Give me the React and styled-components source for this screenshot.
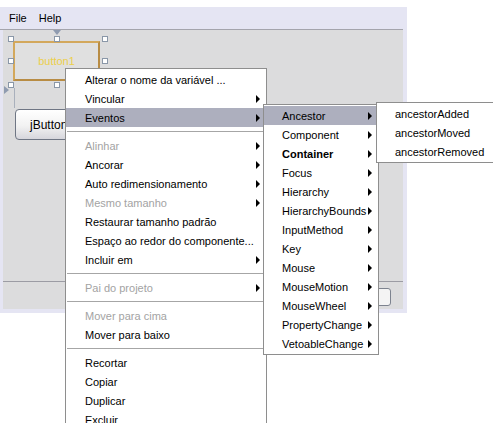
import React from 'react'
import styled, { createGlobalStyle } from 'styled-components'

const GlobalStyle = createGlobalStyle`
  html, body {
    margin: 0;
    padding: 0;
    background: #ffffff;
  }
  body {
    font-family: "Liberation Sans", Arial, sans-serif;
    font-size: 11px;
    color: #000;
  }
`

const Page = styled.div`
  position: relative;
  width: 493px;
  height: 423px;
  overflow: hidden;
  padding-top: 7px;
  box-sizing: border-box;
`

const Window = styled.div`
  width: 407px;
  height: 306px;
  display: flex;
  flex-direction: column;
  background: #e5e5f3;
`

const MenuBar = styled.div`
  height: 23px;
  display: flex;
  align-items: center;
  gap: 12px;
  padding-left: 9px;
  border-bottom: 1px solid #a4a4ac;
  width: 403px;
  box-sizing: border-box;
  font-size: 11px;
`

const PanelWrap = styled.div`
  flex: 1;
  display: flex;
  padding: 0 4px 4px 3px;
`

const Panel = styled.div`
  flex: 1;
  display: flex;
  flex-direction: column;
  background: #dcdcdd;
`

// free-form design surface: components sit where the user dropped them
const Canvas = styled.div`
  position: relative;
  height: 251px;
  border-bottom: 1px solid #9c9ca4;
`

const BottomStrip = styled.div`
  flex: 1;
  display: flex;
  justify-content: flex-end;
  align-items: flex-start;
  padding: 6px 12px 0 0;
`

const Field = styled.div`
  width: 50px;
  height: 16px;
  border: 1px solid #7d838f;
  border-radius: 3px;
  background: #f4f4f4;
`

const Selection = styled.div`
  position: absolute;
  left: 5px;
  top: 6px;
  width: 99px;
  height: 51px;
`

const SelectedButton = styled.div`
  position: absolute;
  left: 5px;
  top: 5px;
  width: 83px;
  height: 36px;
  border: 2px solid #d3a85c;
  border-right-color: #b88c44;
  border-bottom-color: #b88c44;
  background: #e0e0e0;
  display: flex;
  align-items: center;
  justify-content: center;
  color: #eccf4c;
  font-size: 11px;
`

const Handle = styled.div`
  position: absolute;
  width: 4px;
  height: 4px;
  border: 1px solid #8a97a8;
  background: #ffffff;
  left: ${p => p.$x}px;
  top: ${p => p.$y}px;
`

const AnchorLine = styled.div`
  position: absolute;
  left: 6px;
  top: 52px;
  width: 1px;
  height: 20px;
  background: #a9b0bc;
`

const Triangle = styled.div`
  position: absolute;
  width: 0;
  height: 0;
  border-style: solid;
  border-color: transparent;
  ${p => (p.$dir === 'down'
    ? 'left: 50px; top: 0; border-width: 5px 4px 0 4px; border-top-color: #8f9bb0;'
    : 'left: 1px; top: 56px; border-width: 4px 0 4px 5px; border-left-color: #8f9bb0;')}
`

const PlainButton = styled.div`
  position: absolute;
  left: 12px;
  top: 79px;
  width: 90px;
  height: 31px;
  border: 1px solid #6f7684;
  border-radius: 4px;
  background: linear-gradient(#ffffff, #f2f2f2 55%, #d6d6dc);
  display: flex;
  align-items: center;
  padding-left: 14px;
  box-sizing: border-box;
  font-size: 12px;
`

const Menu = styled.div`
  position: absolute;
  left: ${p => p.$x}px;
  top: ${p => p.$y}px;
  width: ${p => p.$w}px;
  background: #ffffff;
  border: 1px solid #8e8e8e;
  padding: 1px 0;
  box-sizing: border-box;
`

const Item = styled.div`
  height: 19px;
  display: flex;
  align-items: center;
  padding-left: ${p => p.$indent}px;
  padding-right: 6px;
  font-size: 11px;
  white-space: nowrap;
  color: ${p => (p.$disabled ? '#a3a3a3' : '#000')};
  font-weight: ${p => (p.$bold ? 700 : 400)};
  background: ${p => (p.$active ? '#adafbe' : 'transparent')};
`

const Label = styled.span`
  flex: 1;
`

const Arrow = styled.span`
  width: 0;
  height: 0;
  border-style: solid;
  border-width: 4px 0 4px 4px;
  border-color: transparent transparent transparent #000;
`

const Separator = styled.div`
  height: 9px;
  display: flex;
  align-items: center;
  padding: 0 1px;
  &::after {
    content: '';
    flex: 1;
    height: 1px;
    background: #a6a6a6;
  }
`

const mainItems = [
  { t: 'Alterar o nome da variável ...' },
  { t: 'Vincular', sub: true },
  { t: 'Eventos', sub: true, active: true },
  '-',
  { t: 'Alinhar', sub: true, dis: true },
  { t: 'Ancorar', sub: true },
  { t: 'Auto redimensionamento', sub: true },
  { t: 'Mesmo tamanho', sub: true, dis: true },
  { t: 'Restaurar tamanho padrão' },
  { t: 'Espaço ao redor do componente...' },
  { t: 'Incluir em', sub: true },
  '-',
  { t: 'Pai do projeto', sub: true, dis: true },
  '-',
  { t: 'Mover para cima', dis: true },
  { t: 'Mover para baixo' },
  '-',
  { t: 'Recortar' },
  { t: 'Copiar' },
  { t: 'Duplicar' },
  { t: 'Excluir' },
]

const eventItems = [
  { t: 'Ancestor', sub: true, active: true },
  { t: 'Component', sub: true },
  { t: 'Container', sub: true, bold: true },
  { t: 'Focus', sub: true },
  { t: 'Hierarchy', sub: true },
  { t: 'HierarchyBounds', sub: true },
  { t: 'InputMethod', sub: true },
  { t: 'Key', sub: true },
  { t: 'Mouse', sub: true },
  { t: 'MouseMotion', sub: true },
  { t: 'MouseWheel', sub: true },
  { t: 'PropertyChange', sub: true },
  { t: 'VetoableChange', sub: true },
]

const ancestorItems = [
  { t: 'ancestorAdded' },
  { t: 'ancestorMoved' },
  { t: 'ancestorRemoved' },
]

const PopupMenu = ({ items, indent, ...props }) => (
  <Menu {...props}>
    {items.map((it, i) =>
      it === '-' ? (
        <Separator key={i} />
      ) : (
        <Item key={i} $indent={indent} $disabled={it.dis} $active={it.active} $bold={it.bold}>
          <Label>{it.t}</Label>
          {it.sub && <Arrow />}
        </Item>
      )
    )}
  </Menu>
)

const handles = [
  [0, 0], [46, 0], [94, 0],
  [0, 22], [94, 22],
  [0, 46], [46, 46],
]

export default function App() {
  return (
    <>
      <GlobalStyle />
      <Page>
        <Window>
          <MenuBar>
            <span>File</span>
            <span>Help</span>
          </MenuBar>
          <PanelWrap>
            <Panel>
              <Canvas>
                <Triangle $dir="down" />
                <Triangle $dir="right" />
                <Selection>
                  <SelectedButton>button1</SelectedButton>
                  <AnchorLine />
                  {handles.map(([x, y], i) => (
                    <Handle key={i} $x={x} $y={y} />
                  ))}
                </Selection>
                <PlainButton>jButton1</PlainButton>
              </Canvas>
              <BottomStrip>
                <Field />
              </BottomStrip>
            </Panel>
          </PanelWrap>
        </Window>

        <PopupMenu items={mainItems} indent={19} $x={65} $y={68} $w={202} />
        <PopupMenu items={eventItems} indent={18} $x={263} $y={104} $w={116} />
        <PopupMenu items={ancestorItems} indent={18} $x={376} $y={102} $w={124} />
      </Page>
    </>
  )
}
